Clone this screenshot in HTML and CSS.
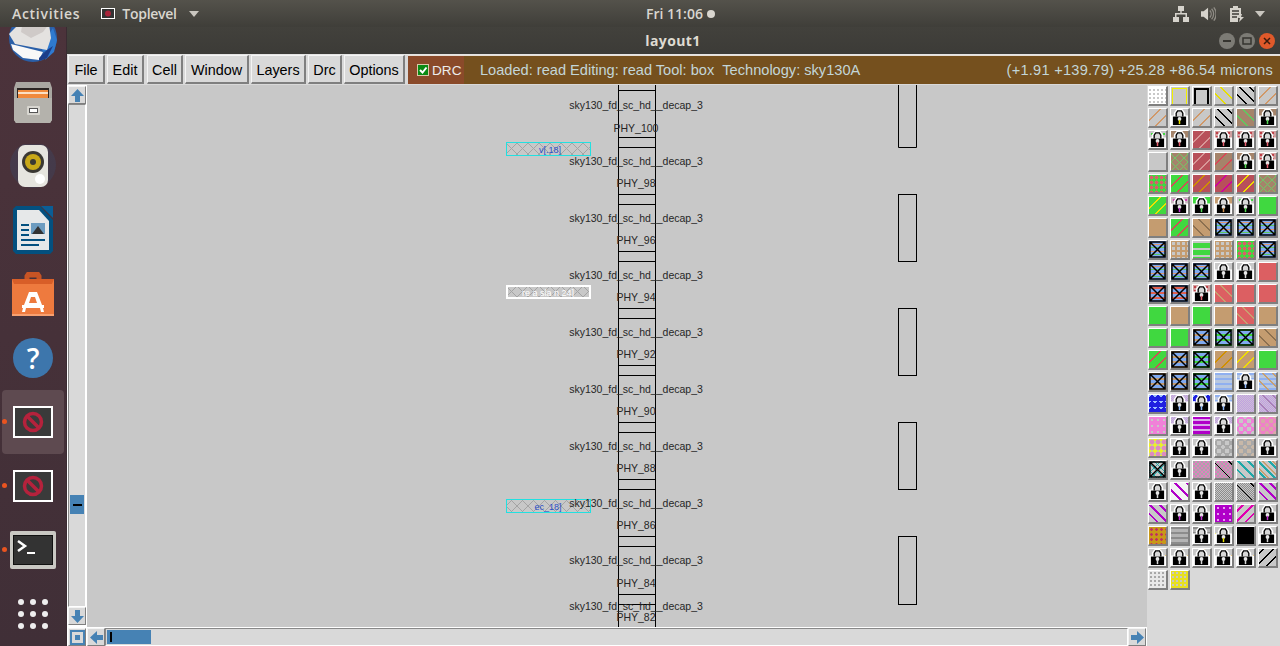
FILE: index.html
```html
<!DOCTYPE html>
<html lang="en">
<head>
<meta charset="utf-8">
<title>layout1</title>
<link rel="stylesheet" href="styles.css">
</head>
<body>
<svg class="defs" width="0" height="0">
  <defs>
    <symbol id="lock" viewBox="0 0 18 18">
      <path d="M6 0h6l3 4v3h3v11H0V7h3V4z" fill="#fff"/>
      <path d="M6.500 2h5L13 4.500V8H5V4.500z" fill="#d8d8d8"/>
      <path d="M5.500 8V4.500L7 2h4l1.500 2.500V8" fill="none" stroke="#000" stroke-width="1.400"/>
      <path d="M2 8h14v9H2z" fill="#000"/>
      <circle cx="9" cy="10.500" r="2" fill="#e8e8e8"/>
      <path d="M8.200 11.500h1.600V16H8.200z" fill="currentColor"/>
    </symbol>
    <symbol id="cross" viewBox="0 0 18 18">
      <path d="M1 1h16v16H1zM1 1l16 16M17 1L1 17" fill="none" stroke="#000" stroke-width="1.600"/>
    </symbol>
    <pattern id="hatch" width="11" height="11" patternUnits="userSpaceOnUse">
      <path d="M0 0L11 11M11 0L0 11" stroke="#a4a4a4" stroke-width="1"/>
    </pattern>
  </defs>
</svg>

<header class="topbar">
  <span class="top-item activities">Activities</span>
  <span class="top-app">
    <svg class="app-icon" width="14" height="11" viewBox="0 0 14 11"><rect width="14" height="11" fill="#fff"/><rect x="1" y="1" width="12" height="9" fill="#333"/><circle cx="7" cy="5.500" r="3" fill="#a8243a"/></svg>
    <span class="top-name">Toplevel</span>
    <i class="caret"></i>
  </span>
  <span class="clock">Fri 11:06<i class="clock-dot"></i></span>
  <span class="tray">
    <svg class="tray-net" width="16" height="16" viewBox="0 0 16 16"><path d="M5 0h6v5H8.700v2H14v4h2v5h-6v-5h2.500V8.500h-9V11H6v5H0v-5h2V7h5.300V5H5z" fill="#d6d3cc"/></svg>
    <svg class="tray-vol" width="15" height="16" viewBox="0 0 17 16"><path d="M0 5h3l5-4v14l-5-4H0z" fill="#d6d3cc"/><path d="M10 4a6 6 0 0 1 0 8M12 2a9 9 0 0 1 0 12M14.500 0.500a12 12 0 0 1 0 15" fill="none" stroke="#8f8c85" stroke-width="1.500"/></svg>
    <svg class="tray-bat" width="16" height="18" viewBox="0 0 16 18"><path d="M4 1h5v2h3v7l-3 3v4H1V3h3z" fill="#d6d3cc"/><path d="M3 6h7M3 9h7M3 12h5" stroke="#3f3e39" stroke-width="1.300"/><path d="M10 17l1-4H9l3-4h1l-1 3h3z" fill="#d6d3cc"/></svg>
    <i class="caret"></i>
  </span>
</header>

<div class="desktop">
  <nav class="dock">
    <div class="dock-item">
      <svg width="48" height="48" viewBox="0 0 48 48"><circle cx="24" cy="24" r="24" fill="#2a5fa8"/><path d="M44 14l4 12-3 12-9 8 4-10-6 2-2-6z" fill="#2f7ad0"/><path d="M0 20l14-14 26 4 2 14-4 12-32-6z" fill="#e4e2e0"/><path d="M2 30l32 8-4 8-16-2-10-8z" fill="#f8f8f8"/><path d="M14 6l-2 12 10 6 12-6 6-8z" fill="#cfcac8"/><path d="M30 44l8-8 6-4-6 12-8 3z" fill="#1c3e8a"/></svg>
    </div>
    <div class="dock-item">
      <svg width="40" height="44" viewBox="0 0 40 44"><path d="M3 2h34l2 6v32l-2 3H3l-2-3V8z" fill="#a9a7a1"/><path d="M4 8h32v10H4z" fill="#2b2523"/><path d="M5 10h30v8H5z" fill="#f08a3c"/><path d="M5 12h30v2H5z" fill="#fbe0c4"/><path d="M1 18h38v22l-2 3H3l-2-3z" fill="#b4b2ac"/><rect x="14" y="26" width="13" height="9" rx="1" fill="#d8d6d0"/><rect x="16" y="28" width="9" height="5" fill="#555"/><rect x="17" y="29" width="7" height="3" fill="#fff"/></svg>
    </div>
    <div class="dock-item">
      <svg width="48" height="44" viewBox="0 0 48 44"><circle cx="24" cy="21" r="23" fill="#3c4a6a" opacity=".35"/><circle cx="24" cy="21" r="15" fill="#4a3038"/><rect x="9" y="1" width="30" height="42" rx="7" fill="#e6e5df"/><circle cx="24" cy="18" r="11" fill="#3a3833"/><circle cx="24" cy="18" r="8" fill="#c8a818"/><circle cx="24" cy="18" r="3" fill="#3a3833"/><circle cx="31" cy="35" r="5" fill="#fff"/></svg>
    </div>
    <div class="dock-item">
      <svg width="40" height="48" viewBox="0 0 40 48"><path d="M3 0h24l13 14v31l-3 3H3l-3-3V3z" fill="#03507f"/><path d="M28 0h12v12z" fill="#0a5e96"/><path d="M4 4h22l10 11v29H4z" fill="#e6e8e9"/><path d="M8 18h8v2H8zM8 23h8v2H8zM8 28h8v2H8zM8 33h24v2H8zM8 38h18v2H8z" fill="#03507f"/><rect x="18" y="17" width="14" height="11" fill="#6d9cc0"/><path d="M19 28l6-8 6 8z" fill="#333"/></svg>
    </div>
    <div class="dock-item">
      <svg width="42" height="44" viewBox="0 0 42 44"><path d="M14 10V4l2-3h10l2 3v6M16 10V4h10v6" fill="none" stroke="#c85424" stroke-width="3"/><path d="M0 7h42v37H0z" fill="#ee7a3e"/><path d="M0 7h42l-2 5H2z" fill="#d85e28"/><path d="M0 42h42v2H0z" fill="#f8a070"/><path d="M17 20h8l5 13h2v3H10v-3h2zM19 25l-2 6h8l-2-6z" fill="#fff"/><path d="M14 36h-3l-1 4h3zM28 36h3l1 4h-3z" fill="#fff"/></svg>
    </div>
    <div class="dock-item">
      <span class="help">?</span>
    </div>
    <div class="dock-item dock-active">
      <i class="run-dot"></i>
      <svg width="40" height="32" viewBox="0 0 40 32"><rect width="40" height="32" fill="#fff"/><rect x="2" y="2" width="36" height="28" fill="#3a3a3a"/><circle cx="20" cy="16" r="8.500" fill="none" stroke="#b5223c" stroke-width="3.500"/><path d="M14 10l12 12" stroke="#b5223c" stroke-width="3.500"/></svg>
    </div>
    <div class="dock-item">
      <i class="run-dot"></i>
      <svg width="40" height="32" viewBox="0 0 40 32"><rect width="40" height="32" fill="#fff"/><rect x="2" y="2" width="36" height="28" fill="#3a3a3a"/><circle cx="20" cy="16" r="8.500" fill="none" stroke="#b5223c" stroke-width="3.500"/><path d="M14 10l12 12" stroke="#b5223c" stroke-width="3.500"/></svg>
    </div>
    <div class="dock-item">
      <i class="run-dot"></i>
      <svg width="46" height="38" viewBox="0 0 46 38"><rect width="46" height="38" rx="2" fill="#c9c8c3"/><rect x="3" y="4" width="40" height="30" fill="#111"/><rect x="4" y="5" width="38" height="28" fill="#333"/><path d="M8 10l7 5-7 5" fill="none" stroke="#fff" stroke-width="2.500"/><path d="M17 21h8v2h-8z" fill="#fff"/></svg>
    </div>
    <div class="dock-item">
      <div class="app-grid"><i></i><i></i><i></i><i></i><i></i><i></i><i></i><i></i><i></i></div>
    </div>
  </nav>

  <main class="window">
    <div class="titlebar">
      <span class="title">layout1</span>
      <span class="win-buttons">
        <i class="win-btn"><svg width="16" height="16" viewBox="0 0 16 16"><path d="M4 8h8" stroke="#35342f" stroke-width="2"/></svg></i>
        <i class="win-btn"><svg width="16" height="16" viewBox="0 0 16 16"><rect x="4" y="5" width="8" height="6" fill="none" stroke="#35342f" stroke-width="1.500"/></svg></i>
        <i class="win-btn win-close"><svg width="16" height="16" viewBox="0 0 16 16"><path d="M5 5l6 6M11 5l-6 6" stroke="#3c1a0c" stroke-width="1.500"/></svg></i>
      </span>
    </div>

    <div class="menubar">
      <button class="menu w-file">File</button>
      <button class="menu w-edit">Edit</button>
      <button class="menu w-cell">Cell</button>
      <button class="menu w-window">Window</button>
      <button class="menu w-layers">Layers</button>
      <button class="menu w-drc">Drc</button>
      <button class="menu w-options">Options</button>
      <label class="drc"><i class="check"><svg width="10" height="10" viewBox="0 0 10 10"><path d="M2 5l2.500 2.500L8.500 2.500" fill="none" stroke="#fff" stroke-width="2"/></svg></i>DRC</label>
      <div class="status">
        <span class="status-left">Loaded: read Editing: read Tool: box &nbsp;Technology: sky130A</span>
        <span class="status-right">(+1.91 +139.79) +25.28 +86.54 microns</span>
      </div>
    </div>

    <div class="workspace">
      <div class="vscroll">
        <button class="sbtn"><svg width="15" height="15" viewBox="0 0 15 15"><path d="M7.500 1L14 8h-4v6H5V8H1z" fill="#4682b4"/></svg></button>
        <div class="vtrough"><i class="vthumb"><b></b></i></div>
        <button class="sbtn"><svg width="15" height="15" viewBox="0 0 15 15"><path d="M7.500 14L14 7h-4V1H5v6H1z" fill="#4682b4"/></svg></button>
      </div>

      <svg class="canvas" viewBox="87 85 1060 542" preserveAspectRatio="none">
        <g class="wires">
          <path d="M618.500 85V627M655.500 85V627"/>
          <path d="M618 90.500h38M618 137.500h38M618 147.500h38M618 194.500h38M618 204.500h38M618 251.500h38M618 261.500h38M618 308.500h38M618 318.500h38M618 365.500h38M618 375.500h38M618 422.500h38M618 432.500h38M618 479.500h38M618 489.500h38M618 536.500h38M618 546.500h38M618 594.500h38M618 604.500h38"/>
          <path d="M898.500 85V147.500H916.500V85"/>
          <rect x="898.500" y="194.500" width="18" height="67"/>
          <rect x="898.500" y="308.500" width="18" height="67"/>
          <rect x="898.500" y="422.500" width="18" height="67"/>
          <rect x="898.500" y="536.500" width="18" height="68"/>
        </g>
        <rect class="pin" x="506.500" y="142.500" width="84" height="13"/>
        <rect class="pin pin-sel" x="507" y="286" width="83" height="12"/>
        <rect class="pin" x="506.500" y="499.500" width="84" height="13"/>
        <text class="pin-text" x="550" y="153">v[.18]</text>
        <text class="pin-text pin-text-sel" x="548" y="296">re a  sla n 24]</text>
        <text class="pin-text" x="548" y="510">ec_18]</text>
        <g class="labels">
          <text x="636" y="109">sky130_fd_sc_hd__decap_3</text><text x="636" y="132">PHY_100</text>
          <text x="636" y="165">sky130_fd_sc_hd__decap_3</text><text x="636" y="187">PHY_98</text>
          <text x="636" y="222">sky130_fd_sc_hd__decap_3</text><text x="636" y="244">PHY_96</text>
          <text x="636" y="279">sky130_fd_sc_hd__decap_3</text><text x="636" y="301">PHY_94</text>
          <text x="636" y="336">sky130_fd_sc_hd__decap_3</text><text x="636" y="358">PHY_92</text>
          <text x="636" y="393">sky130_fd_sc_hd__decap_3</text><text x="636" y="415">PHY_90</text>
          <text x="636" y="450">sky130_fd_sc_hd__decap_3</text><text x="636" y="472">PHY_88</text>
          <text x="636" y="507">sky130_fd_sc_hd__decap_3</text><text x="636" y="529">PHY_86</text>
          <text x="636" y="564">sky130_fd_sc_hd__decap_3</text><text x="636" y="587">PHY_84</text>
          <text x="636" y="610">sky130_fd_sc_hd__decap_3</text><text x="636" y="621">PHY_82</text>
        </g>
      </svg>

      <aside class="layers">
        <i class="t dots-w"></i><i class="t box-y"></i><i class="t box-k"></i><i class="t s-yb"></i><i class="t s-kb"></i><i class="t s-tf"></i>
        <i class="t s-tf"></i><i class="t k-y"><svg><use href="#lock"/></svg></i><i class="t s-tf"></i><i class="t s-kb"></i><i class="t brown s-gb"></i><i class="t brown k-g"><svg><use href="#lock"/></svg></i>
        <i class="t dots-g k-r"><svg><use href="#lock"/></svg></i><i class="t brown k-r"><svg><use href="#lock"/></svg></i><i class="t red s-pf"></i><i class="t dots-r k-r"><svg><use href="#lock"/></svg></i><i class="t dots-r k-r"><svg><use href="#lock"/></svg></i><i class="t dots-r k-r"><svg><use href="#lock"/></svg></i>
        <i class="t"></i><i class="t brown x-g"></i><i class="t red s-pf"></i><i class="t brown s-rf"></i><i class="t brown k-g"><svg><use href="#lock"/></svg></i><i class="t dots-r k-r"><svg><use href="#lock"/></svg></i>
        <i class="t green dots-rg"></i><i class="t green s-rf"></i><i class="t red s-of"></i><i class="t red s-mf"></i><i class="t red s-yf"></i><i class="t brown x-g"></i>
        <i class="t green s-yf"></i><i class="t dots-m k-m"><svg><use href="#lock"/></svg></i><i class="t green k-g"><svg><use href="#lock"/></svg></i><i class="t tan k-o"><svg><use href="#lock"/></svg></i><i class="t dots-g k-g"><svg><use href="#lock"/></svg></i><i class="t green"></i>
        <i class="t tan"></i><i class="t green s-rf"></i><i class="t tan s-bb"></i><i class="t blue c"><svg><use href="#cross"/></svg></i><i class="t blue c"><svg><use href="#cross"/></svg></i><i class="t blue c"><svg><use href="#cross"/></svg></i>
        <i class="t blue c"><svg><use href="#cross"/></svg></i><i class="t tan dots-gr"></i><i class="t green dots-wg"></i><i class="t tan dots-gr"></i><i class="t green dots-rg"></i><i class="t blue c"><svg><use href="#cross"/></svg></i>
        <i class="t blue c"><svg><use href="#cross"/></svg></i><i class="t blue c"><svg><use href="#cross"/></svg></i><i class="t blue c"><svg><use href="#cross"/></svg></i><i class="t"><svg><use href="#lock"/></svg></i><i class="t"><svg><use href="#lock"/></svg></i><i class="t coral"></i>
        <i class="t blue-r c"><svg><use href="#cross"/></svg></i><i class="t blue-r c"><svg><use href="#cross"/></svg></i><i class="t dots-r k-r"><svg><use href="#lock"/></svg></i><i class="t coral s-tb"></i><i class="t coral"></i><i class="t coral"></i>
        <i class="t green"></i><i class="t tan"></i><i class="t green"></i><i class="t tan"></i><i class="t coral s-tb"></i><i class="t tan"></i>
        <i class="t green"></i><i class="t green"></i><i class="t tan-b c"><svg><use href="#cross"/></svg></i><i class="t blue-g c"><svg><use href="#cross"/></svg></i><i class="t blue-g c"><svg><use href="#cross"/></svg></i><i class="t tan s-bb"></i>
        <i class="t green s-rf"></i><i class="t tan-b c"><svg><use href="#cross"/></svg></i><i class="t blue-g c"><svg><use href="#cross"/></svg></i><i class="t tan s-of"></i><i class="t tan s-yf"></i><i class="t green"></i>
        <i class="t tan-b c"><svg><use href="#cross"/></svg></i><i class="t tan-b c"><svg><use href="#cross"/></svg></i><i class="t blue-g c"><svg><use href="#cross"/></svg></i><i class="t wave"></i><i class="t wave k-b"><svg><use href="#lock"/></svg></i><i class="t wave-t"></i>
        <i class="t navy"></i><i class="t lilac k-b"><svg><use href="#lock"/></svg></i><i class="t navy k-b"><svg><use href="#lock"/></svg></i><i class="t wave k-b"><svg><use href="#lock"/></svg></i><i class="t lilac"></i><i class="t lilac-s"></i>
        <i class="t pink"></i><i class="t lilac"><svg><use href="#lock"/></svg></i><i class="t purple-w"></i><i class="t lilac"><svg><use href="#lock"/></svg></i><i class="t ring-p"></i><i class="t ring-t"></i>
        <i class="t yellow-p"></i><i class="t"><svg><use href="#lock"/></svg></i><i class="t"><svg><use href="#lock"/></svg></i><i class="t ring-g"></i><i class="t ring-t2"></i><i class="t"><svg><use href="#lock"/></svg></i>
        <i class="t teal-x c"><svg><use href="#cross"/></svg></i><i class="t"><svg><use href="#lock"/></svg></i><i class="t check-p"></i><i class="t check-p-k"></i><i class="t s-cb"></i><i class="t s-ct"></i>
        <i class="t"><svg><use href="#lock"/></svg></i><i class="t white-m s-mb"></i><i class="t"><svg><use href="#lock"/></svg></i><i class="t check-g"></i><i class="t check-g-k"></i><i class="t s-mb2"></i>
        <i class="t s-mb2"></i><i class="t k-m"><svg><use href="#lock"/></svg></i><i class="t k-m"><svg><use href="#lock"/></svg></i><i class="t purple"></i><i class="t s-mf2"></i><i class="t k-m"><svg><use href="#lock"/></svg></i>
        <i class="t gold"></i><i class="t wave-g"></i><i class="t wave-g"><svg><use href="#lock"/></svg></i><i class="t s-yb k-y"><svg><use href="#lock"/></svg></i><i class="t black"></i><i class="t"><svg><use href="#lock"/></svg></i>
        <i class="t s-of"><svg><use href="#lock"/></svg></i><i class="t s-of"><svg><use href="#lock"/></svg></i><i class="t s-of"><svg><use href="#lock"/></svg></i><i class="t s-of"><svg><use href="#lock"/></svg></i><i class="t s-of"><svg><use href="#lock"/></svg></i><i class="t s-kf"></i>
        <i class="t dots-w2"></i><i class="t dots-y"></i>
      </aside>
    </div>

    <div class="hscroll">
      <button class="sbtn"><svg width="15" height="15" viewBox="0 0 15 15"><rect x="1" y="1" width="13" height="13" fill="none" stroke="#4682b4" stroke-width="2"/><rect x="5" y="5" width="5" height="5" fill="#4682b4"/></svg></button>
      <button class="sbtn sbtn-gap"><svg width="15" height="15" viewBox="0 0 15 15"><path d="M1 7.500L8 1v4h6v5H8v4z" fill="#4682b4"/></svg></button>
      <div class="htrough"><i class="hthumb"><b></b></i></div>
      <button class="sbtn"><svg width="15" height="15" viewBox="0 0 15 15"><path d="M14 7.500L7 1v4H1v5h6v4z" fill="#4682b4"/></svg></button>
    </div>
  </main>
</div>
</body>
</html>
```
FILE: styles.css
```css
* { box-sizing: border-box; }
html, body { margin: 0; height: 646px; overflow: hidden; }
body { display: flex; flex-direction: column; width: 1280px; background: #c8c8c8; font-family: "Liberation Sans", Arial, sans-serif; }
.defs { position: absolute; }
i { display: block; font-style: normal; }

.topbar { height: 27px; flex: none; display: flex; align-items: center; position: relative; padding-left: 12px; background: linear-gradient(#54524b, #3f3e39); color: #d9d6cf; font: 600 14px "Open Sans", sans-serif; }
.top-item { letter-spacing: .7px; }
.top-name { letter-spacing: -.3px; }
.top-app { display: flex; align-items: center; margin-left: 21px; gap: 7px; }
.app-icon { display: block; }
.caret { width: 0; height: 0; border: 5px solid transparent; border-top: 6px solid #c9c6bf; border-bottom: 0; }
.top-app .caret { margin-left: 5px; }
.clock { position: absolute; left: 646px; top: 4px; display: flex; align-items: center; gap: 4px; height: 19px; }
.clock-dot { width: 8px; height: 8px; border-radius: 50%; background: #d9d6cf; }
.tray { margin-left: auto; display: flex; align-items: center; gap: 10px; padding-right: 15px; }
.tray-net { margin-right: 2px; }
.tray-bat { margin: 0 0 0 3px; }

.desktop { flex: 1; display: flex; min-height: 0; }
.dock { width: 67px; flex: none; overflow: hidden; background: linear-gradient(#4c333b, #402f37); display: flex; flex-direction: column; border-right: 1px solid #3a2b32; }
.dock-item { flex: none; height: 64px; display: flex; align-items: center; justify-content: center; position: relative; margin: 0 2px; border-radius: 4px; }
.dock-item:first-child { margin-top: -21px; }
.dock-active { background: #5e4a50; }
.run-dot { position: absolute; left: 0; top: 29px; width: 5px; height: 5px; border-radius: 50%; background: #e95420; }
.help { width: 40px; height: 40px; border-radius: 50%; background: #3d76ac; color: #fff; font: 600 28px/40px "Open Sans", sans-serif; text-align: center; }
.app-grid { display: grid; grid-template-columns: repeat(3, 6px); gap: 6px; }
.app-grid i { width: 6px; height: 6px; border-radius: 50%; background: #eee; }

.window { flex: 1; min-width: 0; display: flex; flex-direction: column; background: #d9d9d9; }
.titlebar { flex: none; height: 28px; display: flex; align-items: center; justify-content: center; position: relative; background: linear-gradient(#42413c, #3c3b37); color: #dfdbd2; border-bottom: 1px solid #e4e4e4; }
.title { font: 700 14px "Open Sans", sans-serif; letter-spacing: .4px; margin-left: -1px; }
.win-buttons { position: absolute; right: 5px; top: 6px; display: flex; gap: 4px; }
.win-btn { width: 16px; height: 16px; border-radius: 50%; background: #7c7b75; }
.win-btn svg { display: block; }
.win-close { background: #e0592a; }

.menubar { flex: none; height: 30px; display: flex; align-items: stretch; padding-left: 1px; }
.menu { height: 29px; padding: 1px 0 0; margin-right: 2px; background: #d9d9d9; color: #000; font: 14.400px "Liberation Sans", Arial, sans-serif; border: 1px solid; border-color: #f4f4f4 #7f7f7f #7f7f7f #f4f4f4; border-width: 1px 2px 2px 1px; }
.w-file { width: 37px; }
.w-edit { width: 37px; }
.w-cell { width: 36px; margin-left: 1px; }
.w-window { width: 64px; }
.w-layers { width: 55px; }
.w-drc { width: 34px; }
.w-options { width: 61px; margin-right: 3px; }
.drc { width: 56px; height: 29px; background: #8a4a2a; color: #ececec; font-size: 13.600px; display: flex; align-items: center; gap: 3px; padding-left: 9px; border-top: 1px solid #e8e0d8; }
.check { width: 12px; height: 12px; background: #0a8a14; border: 1px solid #d8c8a8; }
.check svg { display: block; }
.status { flex: 1; height: 29px; background: #75501e; color: #c3d6d8; font-size: 14.600px; display: flex; align-items: center; justify-content: space-between; padding: 0 7px 0 16px; border-top: 1px solid #e8e0d8; }
.status-right { letter-spacing: .25px; }

.workspace { flex: 1; min-height: 0; display: flex; }
.vscroll { width: 20px; flex: none; display: flex; flex-direction: column; padding: 1px 1px 2px 1px; background: #fff; }
.sbtn { width: 18px; height: 18px; flex: none; padding: 0; background: #d9d9d9; border: 1px solid; border-color: #f4f4f4 #7f7f7f #7f7f7f #f4f4f4; display: flex; align-items: center; justify-content: center; }
.sbtn svg { display: block; }
.vtrough { flex: 1; position: relative; background: #d9d9d9; border: 1px solid; border-color: #888 #fff #fff #888; }
.vthumb { position: absolute; left: 1px; right: 1px; top: 390px; height: 19px; background: #4682b4; display: flex; align-items: center; justify-content: center; }
.vthumb b { width: 9px; height: 2px; background: #000; display: block; }

.canvas { flex: none; width: 1060px; height: 542px; background: #c8c8c8; display: block; }
.wires path, .wires rect { fill: none; stroke: #000; stroke-width: 1; }
.pin { fill: url(#hatch); stroke: #22e0e0; stroke-width: 1; }
.pin-sel { stroke: #fff; stroke-width: 2; }
.pin-text { font-size: 9px; fill: #2b50c8; text-anchor: middle; }
.pin-text-sel { fill: #fff; }
.labels text { font-size: 10.500px; fill: #262626; text-anchor: middle; }

.layers { width: 133px; flex: none; background: #d9d9d9; padding: 1px 0 0 1px; display: grid; grid-template-columns: repeat(6, 20px); grid-auto-rows: 20px; gap: 2px; align-content: start; color: #d8d8d8; }
.t { position: relative; width: 20px; height: 20px; background-color: #c8c8c8; border: 1px solid; border-color: #fff #7f7f7f #7f7f7f #fff; border-width: 1px 2px 2px 1px; overflow: hidden; }
.t svg { position: absolute; left: 0; top: 0; width: 17px; height: 17px; display: block; }
.k-r { color: #e86070; }
.k-g { color: #50d850; }
.k-m { color: #c030d0; }
.k-o { color: #d09050; }
.k-b { color: #90b8f8; }
.k-y { color: #e8e000; }

.brown { background-color: #a5846a; }
.red { background-color: #b8505a; }
.coral { background-color: #dc5f62; }
.green { background-color: #40d840; }
.tan { background-color: #c49c70; }
.black { background-color: #000; }
.purple { background-color: #b000c8; background-image: radial-gradient(#e6a0f0 1.200px, transparent 1.400px); background-size: 6px 6px; }
.blue { background-color: #80aaf0; background-image: repeating-linear-gradient(0deg, transparent 0 3px, #5cc860 3px 4px, transparent 4px 6px, #e09a70 6px 7px); }
.blue-r { background-color: #80aaf0; background-image: repeating-linear-gradient(0deg, transparent 0 3px, #e06050 3px 5px); }
.blue-g { background-color: #80aaf0; background-image: repeating-linear-gradient(0deg, #40d840 0 2px, transparent 2px 5px); }
.tan-b { background-color: #80aaf0; background-image: repeating-linear-gradient(0deg, #c49c70 0 2px, transparent 2px 5px); }
.navy { background-color: #2020e0; background-image: linear-gradient(135deg, #a0c0ff 25%, transparent 25%), linear-gradient(225deg, #a0c0ff 25%, transparent 25%); background-size: 6px 6px; }
.wave { background-color: #c8c8c8; background-image: repeating-linear-gradient(0deg, #90b0f0 0 2px, #b8c8e0 2px 5px); }
.wave-t { background-color: #c8c8c8; background-image: repeating-linear-gradient(45deg, transparent 0 6px, #c8a070 6px 7.500px), repeating-linear-gradient(0deg, #90b0f0 0 2px, #b8c8e0 2px 5px); }
.lilac { background-color: #c8a8e8; background-image: repeating-conic-gradient(#c0a0e0 0 25%, #cdbfd8 0 50%); background-size: 2px 2px; }
.lilac-s { background-color: #c8a8e8; background-image: repeating-linear-gradient(45deg, transparent 0 6px, #a880b8 6px 7.500px), repeating-conic-gradient(#c0a0e0 0 25%, #cdbfd8 0 50%); background-size: auto, 2px 2px; }
.pink { background-color: #f080d8; background-image: radial-gradient(#c8c8c8 1.200px, transparent 1.500px); background-size: 6px 6px; }
.purple-w { background-color: #b000c8; background-image: repeating-linear-gradient(0deg, transparent 0 3px, #d8a8e8 3px 5px); }
.ring-p { background-color: #c8c8c8; background-image: radial-gradient(circle, transparent 2.500px, #f080d8 2.500px 4px, transparent 4px); background-size: 8px 8px; }
.ring-t { background-color: #d8a8a8; background-image: radial-gradient(circle, transparent 2.500px, #f080c8 2.500px 4px, transparent 4px); background-size: 8px 8px; }
.ring-g { background-color: #c8c8c8; background-image: radial-gradient(circle, transparent 2.500px, #a8a8a8 2.500px 4px, transparent 4px); background-size: 8px 8px; }
.ring-t2 { background-color: #c8b8a8; background-image: radial-gradient(circle, transparent 2.500px, #a8a8a8 2.500px 4px, transparent 4px); background-size: 8px 8px; }
.yellow-p { background-color: #f0f020; background-image: radial-gradient(#e08ac0 2px, #c8c8a0 2.500px, transparent 3px); background-size: 6px 6px; }
.teal-x { background-color: #c8c8c8; background-image: repeating-linear-gradient(45deg, #20a8a8 0 1px, transparent 1px 5px), repeating-linear-gradient(-45deg, #20a8a8 0 1px, transparent 1px 5px); }
.check-p { background-color: #a8a8a8; background-image: repeating-conic-gradient(#e080c0 0 25%, #a8a8a8 0 50%); background-size: 4px 4px; }
.check-p-k { background-color: #a8a8a8; background-image: repeating-linear-gradient(45deg, transparent 0 10px, #000 10px 11.200px), repeating-conic-gradient(#e080c0 0 25%, #a8a8a8 0 50%); background-size: auto, 4px 4px; }
.check-g { background-color: #a8a8a8; background-image: repeating-conic-gradient(#8c8c8c 0 25%, #c8c8c8 0 50%); background-size: 2px 2px; }
.check-g-k { background-color: #a8a8a8; background-image: repeating-linear-gradient(45deg, transparent 0 10px, #000 10px 11.200px), repeating-conic-gradient(#8c8c8c 0 25%, #c8c8c8 0 50%); background-size: auto, 2px 2px; }
.white-m { background-color: #f4f4f4; }
.gold { background-color: #c89818; background-image: radial-gradient(#c03060 1.200px, transparent 1.500px); background-size: 5px 5px; }
.wave-g { background-color: #c8c8c8; background-image: repeating-linear-gradient(0deg, #8c8c8c 0 2px, #b4b4b4 2px 5px); }

.dots-w { background-image: linear-gradient(#fff 0 2px, transparent 2px), linear-gradient(90deg, #c8c8c8 0 2px, transparent 2px); background-size: 4px 4px; background-color: #fff; }
.dots-w2 { background-color: #e8e8e8; background-image: radial-gradient(#a8a8a8 1px, transparent 1.300px); background-size: 4px 4px; }
.dots-y { background-color: #e8e020; background-image: radial-gradient(#c8c8c8 1.200px, transparent 1.500px); background-size: 4px 4px; }
.dots-g { background-color: #c8c8c8; background-image: radial-gradient(#40d840 1px, transparent 1.200px); background-size: 6px 6px; }
.dots-r { background-color: #d0a0a0; background-image: radial-gradient(#c04048 1.200px, transparent 1.500px); background-size: 4px 4px; }
.dots-m { background-color: #c8b8c0; background-image: radial-gradient(#d040b0 1.200px, transparent 1.500px); background-size: 6px 6px; }
.dots-rg { background-image: radial-gradient(#d8606a 1.800px, transparent 2.200px); background-size: 5px 5px; }
.dots-wg { background-image: linear-gradient(#c8c8c8 0 2px, transparent 2px); background-size: 5px 7px; }
.dots-gr { background-image: radial-gradient(#c8c8c8 1.500px, transparent 2px); background-size: 5px 5px; }
.box-y::after, .box-k::after { content: ""; position: absolute; left: 1px; top: 1px; right: 1px; bottom: 0; border: 1px solid #f0f000; border-bottom: 0; }
.box-k::after { border: 2px solid #000; border-bottom: 0; }
.x-g { background-image: repeating-linear-gradient(45deg, transparent 0 5px, #70c868 5px 6px), repeating-linear-gradient(-45deg, transparent 0 5px, #70c868 5px 6px); }

.s-yb { background-image: repeating-linear-gradient(45deg, transparent 0 7px, #e8e000 7px 8.200px); }
.s-kb { background-image: repeating-linear-gradient(45deg, transparent 0 6px, #000 6px 7.200px); }
.s-tf { background-image: repeating-linear-gradient(-45deg, transparent 0 7px, #d09868 7px 8.200px); }
.s-gb { background-image: repeating-linear-gradient(45deg, transparent 0 7px, #60c860 7px 8.200px); }
.s-pf { background-image: repeating-linear-gradient(-45deg, transparent 0 7px, #d89898 7px 8.200px); }
.s-rf { background-image: repeating-linear-gradient(-45deg, transparent 0 7px, #d84858 7px 8.200px); }
.s-of { background-image: repeating-linear-gradient(-45deg, transparent 0 7px, #d09000 7px 8.200px); }
.s-mf { background-image: repeating-linear-gradient(-45deg, transparent 0 7px, #d000a0 7px 8.200px); }
.s-yf { background-image: repeating-linear-gradient(-45deg, transparent 0 7px, #f0e000 7px 8.200px); }
.s-bb { background-image: repeating-linear-gradient(45deg, transparent 0 7px, #8c7050 7px 8.200px); }
.s-tb { background-image: repeating-linear-gradient(45deg, transparent 0 7px, #c8a070 7px 8.200px); }
.s-cb { background-image: repeating-linear-gradient(45deg, transparent 0 5px, #20a8a8 5px 7px); }
.s-ct { background-image: repeating-linear-gradient(45deg, transparent 0 3px, #20a8a8 3px 5px, transparent 5px 6px, #c8a070 6px 7.500px); }
.s-mb { background-image: repeating-linear-gradient(45deg, transparent 0 6px, #b000c8 6px 8px); }
.s-mb2 { background-image: repeating-linear-gradient(45deg, transparent 0 5px, #b000c8 5px 7px); }
.s-mf2 { background-image: repeating-linear-gradient(-45deg, transparent 0 5px, #e000b0 5px 7px); }
.s-kf { background-image: repeating-linear-gradient(-45deg, transparent 0 6px, #000 6px 7.200px); }

.hscroll { flex: none; width: 1080px; height: 19px; display: flex; padding: 0 1px; background: #fff; border-top: 1px solid #fff; }
.sbtn-gap { margin-left: 1px; }
.htrough { flex: 1; position: relative; background: #d9d9d9; border: 1px solid; border-color: #888 #fff #fff #888; }
.hthumb { position: absolute; left: 1px; top: 1px; bottom: 1px; width: 44px; background: #4682b4; display: flex; align-items: center; padding-left: 3px; }
.hthumb b { width: 2px; height: 10px; background: #000; display: block; }
```
